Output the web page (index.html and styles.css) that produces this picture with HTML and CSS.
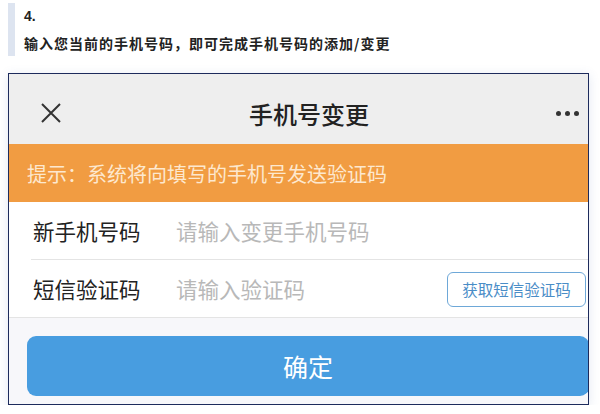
FILE: index.html
```html
<!DOCTYPE html>
<html lang="zh-CN">
<head>
  <meta charset="UTF-8" />
  <meta name="viewport" content="width=device-width, initial-scale=1.0"/>
  <title>手机号变更</title>
  <link rel="stylesheet" href="styles.css">
</head>
<body>
  <div class="note">
    <div class="step">4.</div>
    <p class="desc">输入您当前的手机号码，即可完成手机号码的添加/变更</p>
  </div>

  <div class="frame">
    <div class="phone">
      <div class="topbar">
        <svg class="close" width="22" height="22" viewBox="0 0 22 22">
          <path d="M2 2 L20 20 M20 2 L2 20" stroke="#333" stroke-width="2" fill="none"/>
        </svg>
        <div class="title">手机号变更</div>
        <div class="more"><span></span><span></span><span></span></div>
      </div>

      <div class="tip">提示：系统将向填写的手机号发送验证码</div>

      <div class="form">
        <div class="row">
          <label class="label">新手机号码</label>
          <span class="placeholder">请输入变更手机号码</span>
        </div>
        <div class="row last">
          <label class="label">短信验证码</label>
          <span class="placeholder">请输入验证码</span>
          <button class="code-btn">获取短信验证码</button>
        </div>
      </div>

      <div class="footer">
        <button class="submit">确定</button>
      </div>
    </div>
  </div>
</body>
</html>
```

FILE: styles.css
```css
body {
  margin: 0;
  background: #fff;
  font-family: "Noto Sans CJK SC", "Noto Sans", sans-serif;
  color: #222;
}
.note {
  margin: 3px 0 0 8px;
  height: 53px;
  border-left: 7px solid #dde4f0;
  padding-left: 9px;
  box-sizing: border-box;
}
.step {
  font-family: "Liberation Sans", sans-serif;
  font-weight: bold;
  font-size: 14px;
  line-height: 14px;
  padding-top: 6px;
  color: #222;
}
.desc {
  margin: 12px 0 0;
  font-size: 14px;
  font-weight: bold;
  letter-spacing: 1px;
  line-height: 17px;
  color: #222;
}
.frame {
  margin: 17px 0 0 8px;
  width: 581px;
  height: 332px;
  border: 1px solid #1d2b5c;
  box-sizing: border-box;
  overflow: hidden;
  box-shadow: 0 2px 10px rgba(70, 100, 170, 0.15);
}
.phone {
  width: 600px;
}
.topbar {
  height: 70px;
  background: #eeeeee;
  display: flex;
  align-items: center;
  padding: 8px 28px 0 31px;
  box-sizing: border-box;
}
.close {
  flex: none;
}
.title {
  flex: 1;
  text-align: center;
  font-size: 24px;
  font-weight: 500;
  color: #222;
}
.more {
  display: flex;
  gap: 4px;
  width: 25px;
}
.more span {
  width: 5px;
  height: 5px;
  border-radius: 50%;
  background: #333;
}
.tip {
  height: 58px;
  background: #f19c42;
  color: #fde8cf;
  font-size: 20px;
  display: flex;
  align-items: center;
  padding-left: 18px;
}
.form {
  background: #fff;
}
.row {
  height: 57px;
  margin-left: 22px;
  padding-left: 2px;
  padding-right: 23px;
  border-bottom: 1px solid #e4e4e4;
  display: flex;
  align-items: center;
}
.row.last {
  margin-left: 0;
  padding-left: 24px;
}
.label {
  width: 143px;
  font-size: 21.5px;
  color: #222;
}
.placeholder {
  flex: 1;
  font-size: 21.5px;
  color: #b8b8b8;
}
.code-btn {
  width: 139px;
  height: 35px;
  background: #fff;
  border: 1.5px solid #6ea8d8;
  border-radius: 6px;
  color: #4a8dc7;
  font-family: inherit;
  font-size: 15.5px;
  padding: 0;
  margin-top: 1px;
}
.footer {
  background: #f7f7fa;
  height: 100px;
  padding: 18px 20px 0 18px;
  box-sizing: border-box;
}
.submit {
  width: 100%;
  height: 60px;
  border: none;
  border-radius: 9px;
  background: #489de0;
  color: #fff;
  font-family: inherit;
  font-size: 25px;
}
```
